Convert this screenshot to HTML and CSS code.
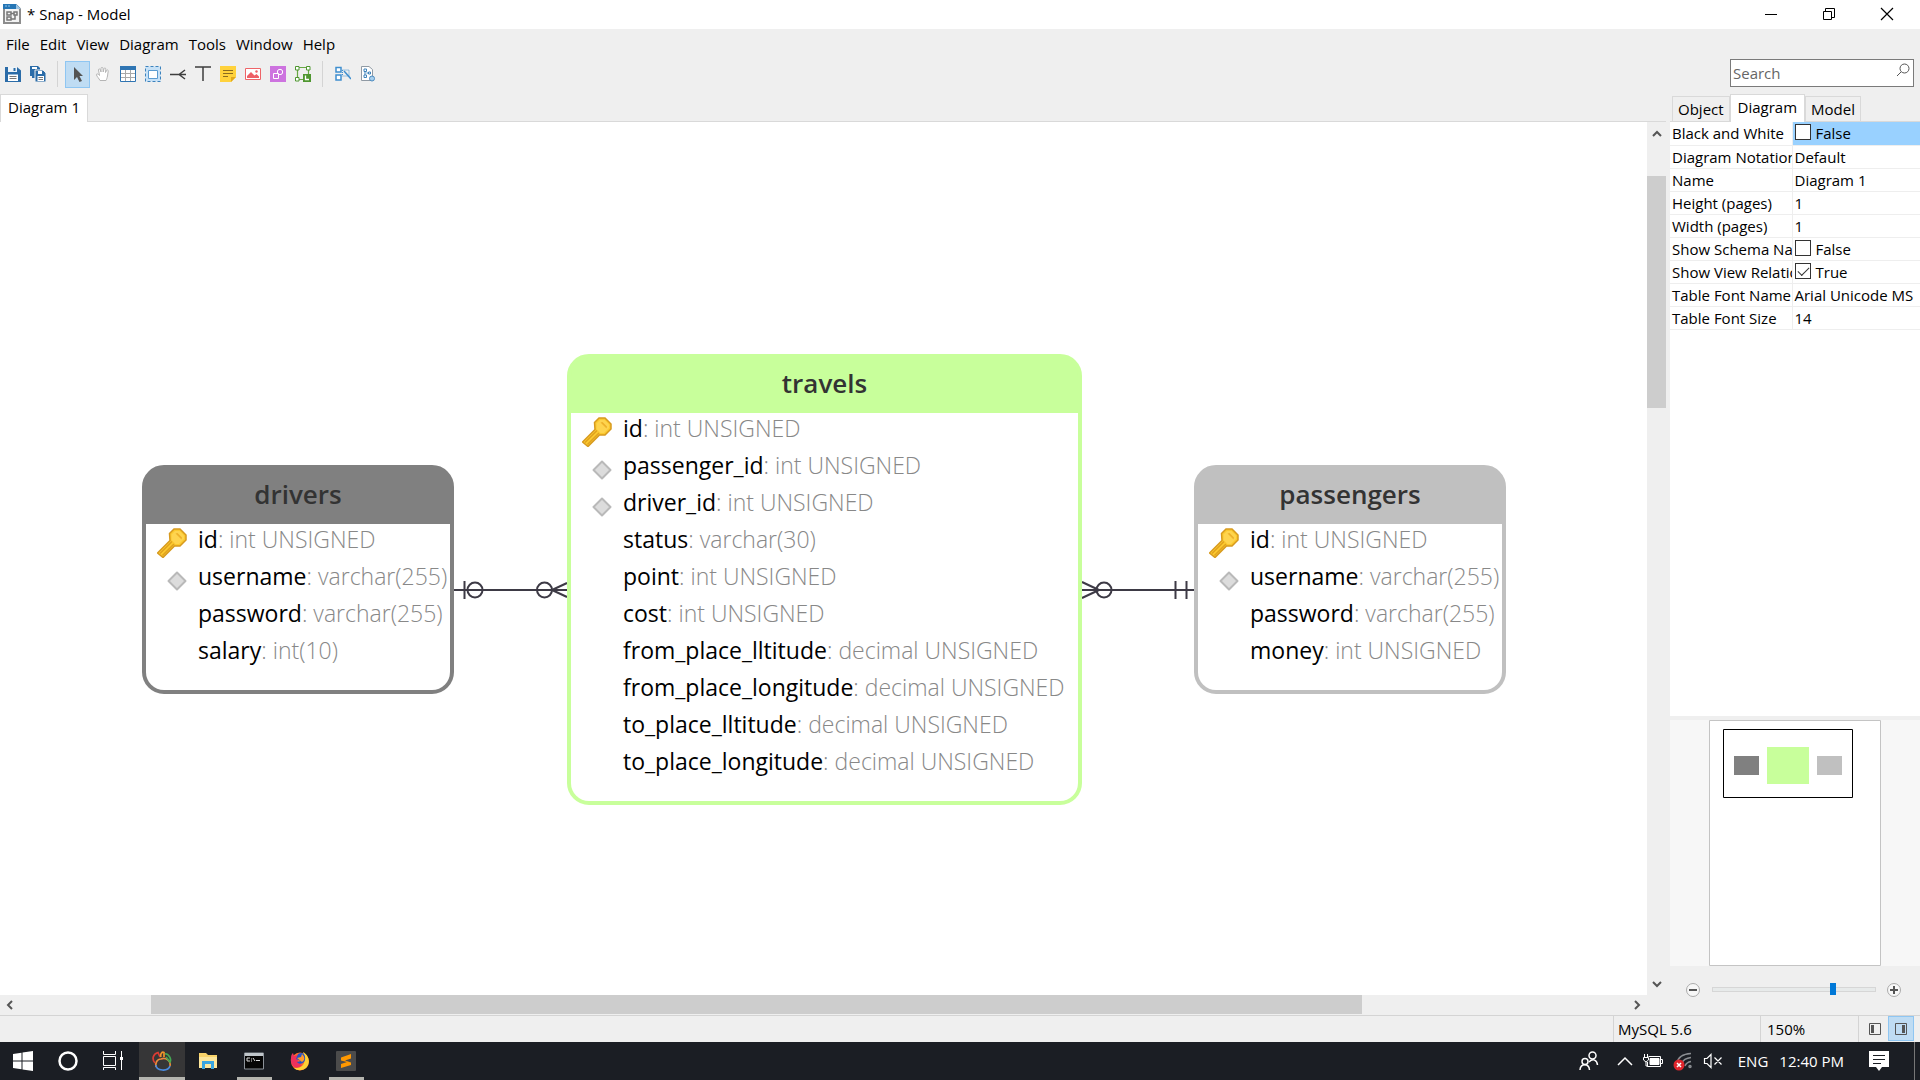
FILE: index.html
```html
<!DOCTYPE html>
<html lang="en">
<head>
<meta charset="utf-8">
<title>* Snap - Model</title>
<link rel="stylesheet" href="styles.css">
</head>
<body>
<svg class="defs" aria-hidden="true">
  <symbol id="key" viewBox="0 0 30 30">
    <path d="M12.500 5.500 L17 1H23L29 7V12L23 18H17.500L6 29.500 0.500 25 13 12.500Z" fill="#fbc92f" stroke="#d79a1f" stroke-width="1.500"/>
    <path d="M3 25.500 15 13.500M5.500 27.500 17 16" stroke="#e0a21f" stroke-width="1.500" fill="none"/>
    <path d="M14.500 6.500 18 3H22.500L27 7.500V11L22 16H18.500L14.500 12Z" fill="#fed44f"/>
    <path d="M18.500 5.500 20.500 5 25 9.500 24.500 11.500Z" fill="#eeb12c"/>
  </symbol>
  <symbol id="diamond" viewBox="0 0 20 20">
    <path d="M10 1.500 18.500 10 10 18.500 1.500 10Z" fill="#dcdcdc" stroke="#b9b9b9" stroke-width="2" stroke-linejoin="round"/>
  </symbol>
</svg>

<header class="titlebar">
  <svg class="app-icon" width="18" height="20" viewBox="0 0 18 20">
    <path d="M1 1H13L17 5V19H1Z" fill="#f3f3f3" stroke="#8d8d8d" stroke-width="2"/>
    <path d="M0 0H13L17 4V5H0Z" fill="#2576b5"/><path d="M13 0V5H18Z" fill="#9cc4e2"/>
    <path d="M2 2H4M5 2H7" stroke="#8fc1e6"/>
    <path d="M4 8H8V11H4ZM11 8H14V11H11ZM4 13H8V16H4ZM8 15H12V11M8 9.500H11" fill="none" stroke="#777" stroke-width="1.500"/>
  </svg>
  <h1 class="title">* Snap - Model</h1>
  <div class="window-controls">
    <button aria-label="Minimize"><svg width="14" height="14"><path d="M1 7.500H13" stroke="#000"/></svg></button>
    <button aria-label="Restore"><svg width="14" height="14"><path d="M1.500 4.500H9.500V12.500H1.500ZM3.500 4V1.500H12.500V10.500H10" fill="none" stroke="#000"/></svg></button>
    <button aria-label="Close"><svg width="14" height="14"><path d="M1 1 13 13M13 1 1 13" stroke="#000" stroke-width="1.200"/></svg></button>
  </div>
</header>

<nav class="menubar">
  <button>File</button><button>Edit</button><button>View</button><button>Diagram</button><button>Tools</button><button>Window</button><button>Help</button>
</nav>

<main class="workspace">
  <section class="editor">
    <div class="toolbar">
      <button aria-label="Save"><svg width="16" height="16"><path d="M0 1H12L16 4.500V16H0Z" fill="#2b6ca8"/><path d="M3 1H12V6H3Z" fill="#eef4f9"/><path d="M8.500 2H10.500V5H8.500Z" fill="#2b6ca8"/><path d="M3 8.500H13V15H3Z" fill="#fff"/><path d="M4.500 10.500H11.500M4.500 12.500H11.500" stroke="#777"/></svg></button>
      <button aria-label="Save all"><svg width="16" height="16"><path d="M0 0H8L10 2V4H5V12H2V10H0Z" fill="#2b6ca8"/><path d="M2 1H7V3H2Z" fill="#fff"/><path d="M5 4H13L16 7V16H5Z" fill="#2b6ca8" stroke="#efefef"/><path d="M8 5H12V8H8ZM7.500 10H14V15H7.500Z" fill="#fff"/><path d="M8.500 11.500H13M8.500 13.500H13" stroke="#777"/></svg></button>
      <span class="separator"></span>
      <button class="active" aria-label="Select"><svg width="16" height="16"><path d="M4 1V14L7 11 9.500 16 12 15 9.500 10H13Z" fill="#555"/></svg></button>
      <button aria-label="Pan"><svg width="16" height="16"><path d="M5 14.500C4 12.500 2 10.500 1.500 9 1 8 2.500 7.500 3.500 8.500L4.500 9.500 3.500 4C3.300 2.700 5 2.500 5.300 3.700L6 6 6 2.500C6 1 8 1 8 2.500L8.200 6 9 2.700C9.300 1.500 11 1.800 10.800 3.200L10.500 6.500 11.500 4.500C12.200 3.500 13.500 4 13.200 5.200L12.500 10C12 12.500 11.500 13.500 11 14.500Z" fill="#fff" stroke="#b5b5b5"/></svg></button>
      <button aria-label="Table"><svg width="16" height="16"><path d="M.5 .5H15.500V15.500H.5Z" fill="#fff" stroke="#2f75b3"/><path d="M0 0H16V4H0Z" fill="#2f75b3"/><path d="M1 7.500H15M1 11.500H15M5.500 4V15M10.500 4V15" stroke="#a9a9a9"/></svg></button>
      <button aria-label="Layer"><svg width="16" height="16"><path d="M.5 .5H15.500V15.500H.5Z" fill="#c6e1f7" stroke="#3c83bd" stroke-dasharray="3 2"/><path d="M3.500 4.500H12.500V12.500H3.500Z" fill="#fff" stroke="#5b9bd0"/></svg></button>
      <button aria-label="Relation"><svg width="16" height="16"><path d="M0 8.500H16M9 8.500 15 4M9 8.500 15 13" fill="none" stroke="#3e3e3e" stroke-width="1.500"/></svg></button>
      <button aria-label="Label"><svg width="16" height="16"><path d="M0 1H16M8 1V15" stroke="#3e3e3e" stroke-width="1.500"/></svg></button>
      <button aria-label="Note"><svg width="16" height="16"><path d="M0 0H16V11L11 16H0Z" fill="#ffd23c"/><path d="M16 11H11V16Z" fill="#e2a91d"/><path d="M3 4.500H13M3 7.500H13M3 10.500H8" stroke="#8b6b1f"/></svg></button>
      <button aria-label="Image"><svg width="16" height="16"><path d="M.5 2.500H15.500V13.500H.5Z" fill="#fff" stroke="#ee6468"/><path d="M2 12V10L6 6 9.500 9.500 11.500 8 14 10.500V12Z" fill="#ee5f66"/><circle cx="11.500" cy="5.500" r="1.200" fill="#ee5f66"/></svg></button>
      <button aria-label="Shape"><svg width="16" height="16"><rect width="16" height="16" fill="#cd73df"/><path d="M3.500 7.500H8.500V12.500H3.500Z" fill="none" stroke="#fff"/><circle cx="10" cy="6" r="2.700" fill="none" stroke="#fff"/></svg></button>
      <button aria-label="Auto layout"><svg width="16" height="16"><path d="M2.500 3V13M3 1.500H13M3 13.500H8M13.500 3V8" stroke="#69a844" stroke-width="1.200" fill="none"/><path d="M.5 .5H4V4H.5ZM11.500 .5H15V4H11.500ZM.5 11.500H4V15H.5Z" fill="#fff" stroke="#4f9730"/><path d="M8 8H16V16H8Z" fill="#4f9730"/><path d="M10.500 9.500V13.500H14" stroke="#fff" stroke-width="1.300" fill="none"/></svg></button>
      <span class="separator"></span>
      <button aria-label="Find and replace"><svg width="16" height="16"><path d="M1 1.500H6V6H1ZM1 9H6V14H1Z" fill="#fff" stroke="#3f8fcf" stroke-width="1.500"/><path d="M7.500 4H14V10H7.500Z" fill="none" stroke="#3f8fcf" stroke-dasharray="1 1"/><path d="M9 5 16 13" stroke="#3f8fcf" stroke-width="1.500"/></svg></button>
      <button aria-label="Diagram settings"><svg width="16" height="16"><path d="M1.500 .5H9L12.500 3.500V14.500H1.500Z" fill="#fff" stroke="#909aa4"/><path d="M4 3H6.500V5.500H4ZM4 9H6.500V11.500H4ZM8.500 6H10.500V8H8.500ZM5 5.500V9M6.500 7H8.500" fill="none" stroke="#3f83bb"/><circle cx="12" cy="12.500" r="2.500" fill="#a9d0ee" stroke="#4d8cc0"/></svg></button>
    </div>
    <div class="tabs"><button class="tab selected">Diagram 1</button></div>
    <div class="canvas-area">
      <div class="canvas">
        <svg class="links" width="1647" height="873" viewBox="0 0 1647 873">
          <g fill="none" stroke="#3d3a45" stroke-width="2">
            <path d="M454 468H567M464.500 459V477M552 468 567 461M552 468 567 475"/>
            <path d="M1082 468H1195M1099 468 1082 460M1099 468 1082 476M1175.500 459V477M1186.500 459V477"/>
            <circle cx="475" cy="468" r="7.500"/><circle cx="544.500" cy="468" r="7.500"/><circle cx="1104" cy="468" r="7.500"/>
          </g>
        </svg>
        <article class="entity drivers">
          <h2>drivers</h2>
          <ul>
            <li><svg class="key"><use href="#key"/></svg><span><b>id</b>: int UNSIGNED</span></li>
            <li><svg class="index"><use href="#diamond"/></svg><span><b>username</b>: varchar(255)</span></li>
            <li><span><b>password</b>: varchar(255)</span></li>
            <li><span><b>salary</b>: int(10)</span></li>
          </ul>
        </article>
        <article class="entity travels">
          <h2>travels</h2>
          <ul>
            <li><svg class="key"><use href="#key"/></svg><span><b>id</b>: int UNSIGNED</span></li>
            <li><svg class="index"><use href="#diamond"/></svg><span><b>passenger_id</b>: int UNSIGNED</span></li>
            <li><svg class="index"><use href="#diamond"/></svg><span><b>driver_id</b>: int UNSIGNED</span></li>
            <li><span><b>status</b>: varchar(30)</span></li>
            <li><span><b>point</b>: int UNSIGNED</span></li>
            <li><span><b>cost</b>: int UNSIGNED</span></li>
            <li><span><b>from_place_lltitude</b>: decimal UNSIGNED</span></li>
            <li><span><b>from_place_longitude</b>: decimal UNSIGNED</span></li>
            <li><span><b>to_place_lltitude</b>: decimal UNSIGNED</span></li>
            <li><span><b>to_place_longitude</b>: decimal UNSIGNED</span></li>
          </ul>
        </article>
        <article class="entity passengers">
          <h2>passengers</h2>
          <ul>
            <li><svg class="key"><use href="#key"/></svg><span><b>id</b>: int UNSIGNED</span></li>
            <li><svg class="index"><use href="#diamond"/></svg><span><b>username</b>: varchar(255)</span></li>
            <li><span><b>password</b>: varchar(255)</span></li>
            <li><span><b>money</b>: int UNSIGNED</span></li>
          </ul>
        </article>
      </div>
      <div class="scroll-v">
        <button aria-label="Scroll up"><svg width="10" height="7"><path d="M1 6 5 2 9 6" /></svg></button>
        <div class="track"><div class="thumb"></div></div>
        <button aria-label="Scroll down"><svg width="10" height="7"><path d="M1 1 5 5 9 1"/></svg></button>
      </div>
      <div class="scroll-h">
        <button aria-label="Scroll left"><svg width="7" height="10"><path d="M6 1 2 5 6 9"/></svg></button>
        <div class="track"><div class="thumb"></div></div>
        <button aria-label="Scroll right"><svg width="7" height="10"><path d="M1 1 5 5 1 9"/></svg></button>
      </div>
    </div>
  </section>

  <aside class="inspector">
    <label class="search"><input type="text" placeholder="Search" aria-label="Search"><svg width="14" height="14"><circle cx="8.500" cy="5.500" r="4.500"/><path d="M5 9 1 13"/></svg></label>
    <div class="tabs"><button class="tab">Object</button><button class="tab selected">Diagram</button><button class="tab">Model</button></div>
    <div class="properties">
      <table>
        <tr class="current"><th scope="row">Black and White</th><td><label><input type="checkbox">False</label></td></tr>
        <tr><th scope="row">Diagram Notation</th><td>Default</td></tr>
        <tr><th scope="row">Name</th><td>Diagram 1</td></tr>
        <tr><th scope="row">Height (pages)</th><td>1</td></tr>
        <tr><th scope="row">Width (pages)</th><td>1</td></tr>
        <tr><th scope="row">Show Schema Name</th><td><label><input type="checkbox">False</label></td></tr>
        <tr><th scope="row">Show View Relations</th><td><label><input type="checkbox" checked>True</label></td></tr>
        <tr><th scope="row">Table Font Name</th><td>Arial Unicode MS</td></tr>
        <tr><th scope="row">Table Font Size</th><td>14</td></tr>
      </table>
    </div>
    <div class="minimap">
      <svg width="172" height="246"><path d="M.5 .5H171.500V245.500H.5Z" fill="#fff" stroke="#c4c4c4"/><path d="M14.500 9.500H143.500V77.500H14.500Z" fill="none" stroke="#000"/><path d="M25 36H50V55H25Z" fill="#808080"/><path d="M58 27H100V64H58Z" fill="#c8ff9b"/><path d="M108 36H133V55H108Z" fill="#c0c0c0"/></svg>
    </div>
    <div class="zoom">
      <button aria-label="Zoom out"><svg width="14" height="14"><circle cx="7" cy="7" r="6.500"/><path d="M3 7H11"/></svg></button>
      <input type="range" min="0" max="100" value="75" aria-label="Zoom">
      <button aria-label="Zoom in"><svg width="14" height="14"><circle cx="7" cy="7" r="6.500"/><path d="M3 7H11M7 3V11"/></svg></button>
    </div>
  </aside>
</main>

<footer class="statusbar">
  <span class="cell engine">MySQL 5.6</span>
  <span class="cell scale">150%</span>
  <span class="cell panes">
    <button aria-label="Left pane"><svg width="12" height="12"><path d="M.5 .5H11.500V11.500H.5Z" fill="none" stroke="#555"/><path d="M2 2H5V10H2Z" fill="#555"/></svg></button>
    <button class="active" aria-label="Right pane"><svg width="12" height="12"><path d="M.5 .5H11.500V11.500H.5Z" fill="none" stroke="#555"/><path d="M7 2H10V10H7Z" fill="#555"/></svg></button>
  </span>
</footer>

<nav class="taskbar">
  <div class="apps">
    <div class="system">
      <button aria-label="Start"><svg width="20" height="20"><path d="M0 3 8.500 1.800V9.500H0ZM9.500 1.600 20 0V9.500H9.500ZM0 10.500H8.500V18.200L0 17ZM9.500 10.500H20V20L9.500 18.400Z" fill="#fff"/></svg></button>
      <button aria-label="Cortana"><svg width="20" height="20"><circle cx="10" cy="10" r="8.500" fill="none" stroke="#fff" stroke-width="2.500"/></svg></button>
      <button aria-label="Task view"><svg width="20" height="20"><path d="M.5 0V3.500H12.500V0M.5 5.500H12.500V14.500H.5ZM.5 19V16.500H12.500V19M18.500 0V19" fill="none" stroke="#fff"/><path d="M17 6H20V9H17Z" fill="#fff"/></svg></button>
    </div>
    <button class="open front" aria-label="Navicat"><svg width="20" height="20" fill="none" stroke-width="1.700"><path d="M4 16C3 12 5 8 9 8 14 6 19 10 18 15" stroke="#e98a3c"/><path d="M4 14C4 20 16 21 18 15" stroke="#4a8be0"/><path d="M3 12C-.5 8 1 3 6 1.500L8 6" stroke="#dd3c33"/><path d="M9 6C8 3 10 .5 12 1.500L12 6" stroke="#f0952a"/><path d="M13 3C16 2 20 8 18 11L14 6" stroke="#44a853"/></svg></button>
    <button aria-label="File Explorer"><svg width="20" height="20"><path d="M1 2H8L10 4H19V17H1Z" fill="#f9d36a"/><path d="M1 6H19V17H1Z" fill="#fde69b"/><path d="M4 18V10H16V18H13V13H7V18Z" fill="#39a5e0"/></svg></button>
    <button class="open" aria-label="Command Prompt"><svg width="20" height="20"><path d="M.5 2H19.500V18H.5Z" fill="#050505" stroke="#8c9299"/><path d="M1 2H19V5H1Z" fill="#bfc5ca"/><path d="M6 7H3V10H6M7.500 7.500V8.500M7.500 9.500V10.500M9 7 11 10M12 9.500H16" stroke="#ddd" fill="none"/></svg></button>
    <button aria-label="Firefox"><svg width="20" height="20"><circle cx="10" cy="10.500" r="9" fill="#ff6a2b"/><path d="M13 1C19 4 21 12 16 17 12 20 7 20 4 17 13 18 17 12 13 1Z" fill="#ffd235"/><path d="M1 7C1 4 2 3 3 2L4 5 8 4Q6 12 12 14 7 19 3 15 0 11 1 7Z" fill="#ef315b"/><path d="M8 3C13 0 16 4 15 9 14 13 9 14 7 11L11 10 6 8Z" fill="#2355c7"/><path d="M7 7 11 6 12 3C16 7 14 10 12 11" fill="#ff9a2b"/></svg></button>
    <button class="open" aria-label="Sublime Text"><svg width="20" height="20"><rect width="20" height="20" rx="1" fill="#4b4b4b"/><path d="M5 6.500 15 3V7.500L9 9.500 15 11.500V14L5 17V13L11 11 5 9.500Z" fill="#ff9800"/></svg></button>
  </div>
  <div class="tray">
    <svg class="people" width="20" height="20" fill="none" stroke="#fff" stroke-width="1.500"><circle cx="13.500" cy="4.500" r="3.500"/><circle cx="6" cy="10.500" r="3"/><path d="M1 19C1.500 12 10 12 10.500 19M10 11C14 7 18 9 18.500 14"/></svg>
    <svg width="16" height="20" fill="none" stroke="#fff" stroke-width="1.500"><path d="M1 14 8 7 15 14"/></svg>
    <svg width="20" height="20" fill="none" stroke="#fff"><path d="M5.500 5.500H17.500V15.500H4.500V11M18 8.500H19.500V12.500H18" /><path d="M7 7.500H16V13.500H7Z" fill="#fff"/><path d="M1.500 3V6M4.500 3V6M.5 6.500H5.500V9L3 11 .5 9ZM3 11V15H5"/></svg>
    <svg width="20" height="20" fill="none" stroke="#8b8e92" stroke-width="1.500"><path d="M4 12C5 6 10 3 18 2.500M8 13C10 9 13 7 18 6.500M12 15C13 12.500 15 11 18 10.500"/><circle cx="17" cy="15.500" r="1" /><circle cx="6" cy="14" r="5.500" fill="#e0252c" stroke="none"/><path d="M4 12 8 16M8 12 4 16" stroke="#fff"/></svg>
    <svg width="20" height="20" fill="none" stroke="#fff" stroke-width="1.200"><path d="M1.500 7.500H4L8 3.500V16.500L4 12.500H1.500ZM11.500 6.500 18.500 13.500M18.500 6.500 11.500 13.500"/></svg>
    <span class="lang">ENG</span>
    <time>12:40 PM</time>
    <button aria-label="Notifications"><svg width="20" height="20"><path d="M0 0H20V16H13L10 20 7 16H0Z" fill="#fff"/><path d="M4 4.500H16M4 8.500H16M4 12.500H12" stroke="#1b1e24"/></svg></button>
  </div>
</nav>
</body>
</html>
```
FILE: styles.css
```css
* { box-sizing: border-box; }
body {
  margin: 0;
  height: 100vh;
  display: flex;
  flex-direction: column;
  background: #efefef;
  color: #000;
  font: 15px/20px "Open Sans", "Noto Sans", sans-serif;
  overflow: hidden;
}
button {
  margin: 0;
  padding: 0;
  border: 0;
  background: none;
  color: inherit;
  font: inherit;
}
svg { display: block; flex: none; }
.defs { position: absolute; width: 0; height: 0; }

.titlebar {
  display: flex;
  align-items: center;
  gap: 6px;
  height: 29px;
  padding: 0 4px 2px 3px;
  background: #fff;
}
.title { margin: 0; font-size: 15px; font-weight: 400; }
.window-controls { display: flex; margin-left: auto; }
.window-controls button { display: flex; justify-content: center; width: 58px; }

.menubar {
  display: flex;
  align-items: center;
  gap: 10px;
  height: 31px;
  padding: 0 0 2px 6px;
}

.workspace { flex: 1; display: flex; gap: 4px; min-height: 0; }
.editor { flex: 1; display: flex; flex-direction: column; min-width: 0; }
.inspector { width: 250px; display: flex; flex-direction: column; }

.toolbar { display: flex; align-items: center; height: 28px; }
.toolbar button {
  display: flex;
  align-items: center;
  justify-content: center;
  width: 25px;
  height: 27px;
}
.toolbar .active { background: #bfdcf3; border: 1px solid #8fc6f2; }
.separator { width: 1px; height: 26px; margin: 0 7px; background: #d4d4d4; }

.tabs {
  display: flex;
  align-items: flex-end;
  height: 34px;
  border-bottom: 1px solid #d9d9d9;
}
.tab {
  height: 25px;
  padding: 0 5px;
  border: 1px solid #d9d9d9;
  border-bottom: 0;
}
.tab.selected {
  height: 28px;
  margin-bottom: -1px;
  padding: 0 7px 3px;
  background: #fff;
}

.canvas-area {
  flex: 1;
  display: grid;
  grid-template: minmax(0, 1fr) 20px / minmax(0, 1fr) 19px;
  min-height: 0;
}
.canvas { position: relative; overflow: hidden; background: #fff; }
.links { position: absolute; left: 0; top: 0; }

.entity {
  position: absolute;
  border: 4px solid var(--tone);
  border-radius: 22px;
  background: var(--tone);
}
.entity h2 {
  margin: 0;
  padding-bottom: 5px;
  color: #333;
  font-size: 26px;
  font-weight: 600;
  line-height: 50px;
  text-align: center;
}
.entity ul {
  margin: 0;
  padding: 0 0 18px;
  border-radius: 0 0 18px 18px;
  background: #fff;
  list-style: none;
}
.entity li {
  display: grid;
  grid-template-columns: 41px 1fr;
  column-gap: 11px;
  align-items: center;
  height: 37px;
  color: #888;
  font-size: 23px;
  font-weight: 300;
  line-height: 28px;
  white-space: nowrap;
}
.entity li span { grid-column: 2; padding-bottom: 8px; }
.entity b { color: #000; font-weight: 400; }
.key { width: 30px; height: 30px; justify-self: end; }
.index { width: 20px; height: 20px; margin-top: 2px; justify-self: end; }
.drivers { --tone: #808080; left: 142px; top: 343px; width: 312px; }
.travels { --tone: #c8ff9b; left: 567px; top: 232px; width: 515px; }
.passengers { --tone: #c0c0c0; left: 1194px; top: 343px; width: 312px; }

.scroll-v, .scroll-h { display: flex; }
.scroll-v { flex-direction: column; }
.scroll-v button, .scroll-h button {
  display: flex;
  align-items: center;
  justify-content: center;
  width: 19px;
  height: 22px;
}
.scroll-h button { height: 19px; }
.scroll-v path, .scroll-h path { fill: none; stroke: #555; stroke-width: 2; }
.track { flex: 1; }
.thumb { background: #cdcdcd; }
.scroll-v .thumb { height: 28%; margin-top: 32px; }
.scroll-h .thumb { height: 19px; margin: 0 266px 0 132px; }

.search {
  display: flex;
  width: 184px;
  height: 28px;
  margin: -1px 6px 1px auto;
  padding: 3px 3px 0 2px;
  border: 1px solid #7a7a7a;
  background: #fff;
}
.search input {
  flex: 1;
  min-width: 0;
  height: 20px;
  padding: 0;
  border: 0;
  outline: 0;
  background: none;
  font: inherit;
}
.search input::placeholder { color: #666; opacity: 1; }
.search svg { fill: none; stroke: #555; }
.inspector .tabs { padding-left: 2px; }

.properties { flex: 1; background: #fff; overflow: hidden; }
.properties table { width: 100%; border-collapse: collapse; table-layout: fixed; }
.properties th, .properties td {
  height: 23px;
  padding: 0 0 0 2px;
  border-bottom: 1px solid #eee;
  font-weight: 400;
  text-align: left;
  line-height: 20px;
  white-space: nowrap;
  overflow: hidden;
}
.properties th { width: 122px; border-right: 1px solid #eee; }
.properties .current td { background: #99d1ff; }
.properties label { display: flex; align-items: center; gap: 5px; }
.properties input {
  appearance: none;
  width: 16px;
  height: 16px;
  margin: 0 0 2px;
  border: 1px solid #333;
  background: #fff;
}
.properties input:checked::before {
  content: "";
  display: block;
  width: 10px;
  height: 5px;
  margin: 3px 2px;
  border: solid #333;
  border-width: 0 0 1px 1px;
  transform: rotate(-45deg);
}

.minimap {
  display: flex;
  justify-content: center;
  margin-top: 4px;
  background: #f7f7f7;
}
.zoom {
  display: flex;
  align-items: center;
  justify-content: space-between;
  height: 49px;
  padding: 0 19px 2px 16px;
}
.zoom circle { fill: #f7f7f7; stroke: #aaa; }
.zoom path { stroke: #555; stroke-width: 2; }
.zoom input { appearance: none; width: 164px; height: 12px; margin: 0; background: none; }
.zoom input::-webkit-slider-runnable-track { height: 5px; border: 1px solid #d6d6d6; background: #e7eaea; }
.zoom input::-webkit-slider-thumb { appearance: none; width: 6px; height: 12px; margin-top: -5px; background: #0078d7; }

.statusbar {
  display: flex;
  justify-content: flex-end;
  height: 27px;
  border-top: 1px solid #d4d4d4;
}
.cell { padding: 3px 4px; border-left: 1px solid #d4d4d4; }
.engine { width: 147px; }
.scale { width: 98px; padding-left: 6px; }
.panes { display: flex; width: 62px; padding: 0 0 0 3px; }
.panes button { display: flex; align-items: center; justify-content: center; width: 26px; height: 25px; }
.panes .active { background: #bfdcf3; border: 1px solid #8fc6f2; }

.taskbar {
  display: flex;
  justify-content: space-between;
  height: 38px;
  background: #1b1e24;
  color: #fff;
}
.apps, .system { display: flex; }
.system { margin-right: 4px; }
.apps button {
  display: flex;
  align-items: center;
  justify-content: center;
  width: 46px;
}
.apps .system button { width: 45px; }
.apps .open { background: linear-gradient(#b5b5af, #b5b5af) bottom / 35px 3px no-repeat; }
.apps .front { background-color: #363637; background-size: 100% 3px; }
.tray {
  display: flex;
  align-items: center;
  gap: 10px;
  margin-right: 5px;
  padding-right: 25px;
  border-right: 1px solid #777;
}
.people { margin-right: 8px; }
.tray time { margin: 0 15px 0 1px; }
.lang { margin-left: 5px; }
```
